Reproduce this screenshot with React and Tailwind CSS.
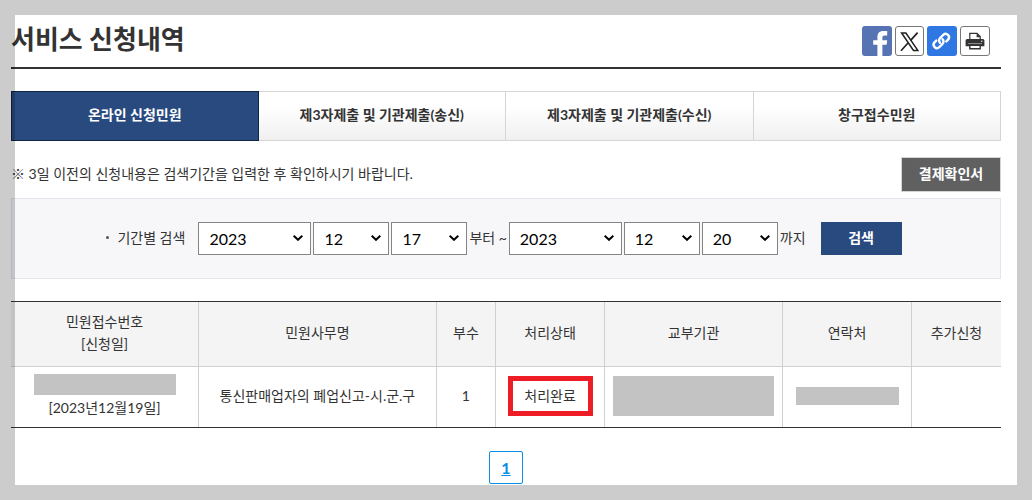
import { useState } from 'react';

const tabs = ['온라인 신청민원', '제3자제출 및 기관제출(송신)', '제3자제출 및 기관제출(수신)', '창구접수민원'];

const columns = [
  { label: '민원접수번호', sub: '[신청일]', width: 'w-[19%]' },
  { label: '민원사무명', width: 'w-[24%]' },
  { label: '부수', width: 'w-[6%]' },
  { label: '처리상태', width: 'w-[11%]' },
  { label: '교부기관', width: 'w-[18%]' },
  { label: '연락처', width: 'w-[13%]' },
  { label: '추가신청', width: 'w-[9%]' },
];

const years = ['2021', '2022', '2023', '2024'];
const months = Array.from({ length: 12 }, (_, i) => String(i + 1).padStart(2, '0'));
const days = Array.from({ length: 31 }, (_, i) => String(i + 1).padStart(2, '0'));

function DateSelect({ label, options, value, onChange, wide }) {
  return (
    <div className={`relative ${wide ? 'w-[113px]' : 'w-[76px]'}`}>
      <select
        aria-label={label}
        value={value}
        onChange={(e) => onChange(e.target.value)}
        className="h-[33px] w-full appearance-none border border-[#858585] bg-white px-[10px] text-base text-black"
      >
        {options.map((option) => (
          <option key={option} value={option}>{option}</option>
        ))}
      </select>
      <svg viewBox="0 0 10 6" className="pointer-events-none absolute top-[13px] right-2 h-[6px] w-[10px]" fill="none" stroke="#000" strokeWidth="2">
        <path d="M.7.8L5 4.8 9.3.8" />
      </svg>
    </div>
  );
}

function DateGroup({ name, initial }) {
  const [date, setDate] = useState(initial);
  return (
    <div className="flex gap-[2px]">
      <DateSelect wide label={`${name} 년`} options={years} value={date.year} onChange={(year) => setDate({ ...date, year })} />
      <DateSelect label={`${name} 월`} options={months} value={date.month} onChange={(month) => setDate({ ...date, month })} />
      <DateSelect label={`${name} 일`} options={days} value={date.day} onChange={(day) => setDate({ ...date, day })} />
    </div>
  );
}

function ShareButtons() {
  return (
    <div className="flex gap-[3px] pr-[11px]">
      <button type="button" aria-label="페이스북" className="h-[30px] w-[30px] overflow-hidden rounded-[3px] bg-[#5673b3]">
        <svg viewBox="0 0 30 30" className="h-full w-full">
          <path d="M15.4 30V18.8h-4.2v-4.6h4.2v-3.1c0-4 2.3-6 5.8-6h4v4.5h-2.3c-1.9 0-2.5.8-2.5 2.3v2.3h4.8l-.6 4.6h-4.2V30z" fill="#fff" />
        </svg>
      </button>
      <button type="button" aria-label="X" className="h-[30px] w-[29px] rounded-[3px] border border-[#777] bg-white">
        <svg viewBox="0 0 27 28" className="h-full w-full" fill="none" stroke="#222">
          <path d="M5.6 6h4.3l11.9 17.4h-4.3z" strokeWidth="1.5" />
          <path d="M21.6 5.6l-7 7.8M12.2 15.8L5 23.8" strokeWidth="1.7" />
        </svg>
      </button>
      <button type="button" aria-label="링크 복사" className="h-[30px] w-[30px] rounded-[3px] bg-[#2f78e4]">
        <svg viewBox="0 0 30 30" className="h-full w-full" fill="none" stroke="#fff" strokeWidth="2.4" strokeLinecap="round">
          <path d="M13.1 16.8a3.4 3.4 0 0 1 0-4.8l3.2-3.2a3.4 3.4 0 0 1 4.8 4.8l-1.8 1.8" />
          <path d="M15.5 13.2a3.4 3.4 0 0 1 0 4.8l-3.2 3.2a3.4 3.4 0 0 1-4.8-4.8l1.8-1.8" />
        </svg>
      </button>
      <button type="button" aria-label="인쇄" className="h-[30px] w-[30px] rounded-[3px] border border-[#777] bg-white">
        <svg viewBox="0 0 28 28" className="h-full w-full">
          <path d="M8.8 12V6.4h7.2l3.2 3.2V12" fill="#fff" stroke="#333" strokeWidth="1.2" />
          <path d="M15.6 6.2v4h4z" fill="#333" />
          <path d="M6.2 12h15.6a1.6 1.6 0 0 1 1.6 1.6v5.6H4.6v-5.6A1.6 1.6 0 0 1 6.2 12z" fill="#333" />
          <path d="M8.8 18.2h10.4v3.6H8.8z" fill="#fff" stroke="#333" strokeWidth="1.4" />
          <path d="M7 16.6h14" stroke="#bbb" strokeWidth=".7" />
          <circle cx="20.8" cy="14.2" r=".7" fill="#fff" />
        </svg>
      </button>
    </div>
  );
}

export default function App() {
  const [active, setActive] = useState(0);

  return (
    <div className="relative min-h-screen bg-white pt-[14px] pr-[31px] pl-[11px] font-[Lato,'Noto_Sans_CJK_KR',sans-serif] text-sm text-[#333]">
      <header className="flex h-[55px] items-center justify-between border-b-2 border-[#333]">
        <h1 className="pb-1 text-[26px] leading-8 font-bold">서비스 신청내역</h1>
        <ShareButtons />
      </header>

      <nav className="mt-[22px] grid h-[50px] grid-cols-4">
        {tabs.map((tab, i) => (
          <button
            key={tab}
            type="button"
            onClick={() => setActive(i)}
            className={`border pb-[2px] font-bold ${
              active === i
                ? 'border-[#0f2440] bg-[#294a7f] text-white'
                : 'border-l-0 border-[#d5d5d5] bg-linear-to-b from-white from-30% to-[#f0f0f0]'
            }`}
          >
            {tab}
          </button>
        ))}
      </nav>

      <div className="mt-4 flex items-center justify-between">
        <p className="pb-[2px]">※ 3일 이전의 신청내용은 검색기간을 입력한 후 확인하시기 바랍니다.</p>
        <button type="button" className="h-[35px] w-[100px] border border-[#d5d5d5] bg-[#606060] pb-[2px] font-bold text-white">결제확인서</button>
      </div>

      <form
        onSubmit={(e) => e.preventDefault()}
        className="mt-[6px] flex h-[81px] items-center justify-center gap-[2px] border border-[#e4e4eb] bg-[#f7f7fa] pr-1"
      >
        <div className="mr-[11px] flex items-center gap-2 pb-[2px]">
          <span className="h-[3px] w-[3px] rounded-full bg-[#555]" />
          기간별 검색
        </div>
        <DateGroup name="시작" initial={{ year: '2023', month: '12', day: '17' }} />
        <span className="pb-[2px]">부터 ~</span>
        <DateGroup name="종료" initial={{ year: '2023', month: '12', day: '20' }} />
        <span className="pb-[2px]">까지</span>
        <button type="submit" className="ml-[13px] h-[33px] w-[81px] bg-[#294a7f] pb-[2px] font-bold text-white">검색</button>
      </form>

      <table className="mt-[22px] w-full table-fixed border-separate border-spacing-0 border-y border-[#333] text-center leading-[22px]">
        <thead>
          <tr className="h-[65px] bg-[#f4f4f4]">
            {columns.map((col) => (
              <th key={col.label} scope="col" className={`border-r border-b border-[#d0d0d0] pb-[2px] font-normal last:border-r-0 ${col.width}`}>
                {col.label}
                {col.sub && <span className="block">{col.sub}</span>}
              </th>
            ))}
          </tr>
        </thead>
        <tbody>
          <tr className="h-[60px] *:border-r *:border-[#d0d0d0] *:pb-[2px] *:last:border-r-0">
            <td>
              <div className="mx-auto mb-[2px] h-[21px] w-[142px] bg-[#c3c3c3]" />
              [2023년12월19일]
            </td>
            <td>통신판매업자의 폐업신고-시.군.구</td>
            <td>1</td>
            <td>
              <div className="mx-auto flex h-10 w-[85px] items-center justify-center border-[5px] border-[#ee1c24]">처리완료</div>
            </td>
            <td>
              <div className="mx-auto h-10 w-[161px] bg-[#c3c3c3]" />
            </td>
            <td>
              <div className="mx-auto h-[18px] w-[103px] bg-[#c3c3c3]" />
            </td>
            <td />
          </tr>
        </tbody>
      </table>

      <div className="mt-[23px] flex justify-center">
        <a href="#1" aria-current="page" className="flex h-[33px] w-[34px] items-center justify-center rounded-[2px] border border-[#0a8ee5] text-base font-bold text-[#0a8ee5] underline">1</a>
      </div>

      <div className="pointer-events-none absolute inset-0 border-[15px] border-black/20" />
    </div>
  );
}
